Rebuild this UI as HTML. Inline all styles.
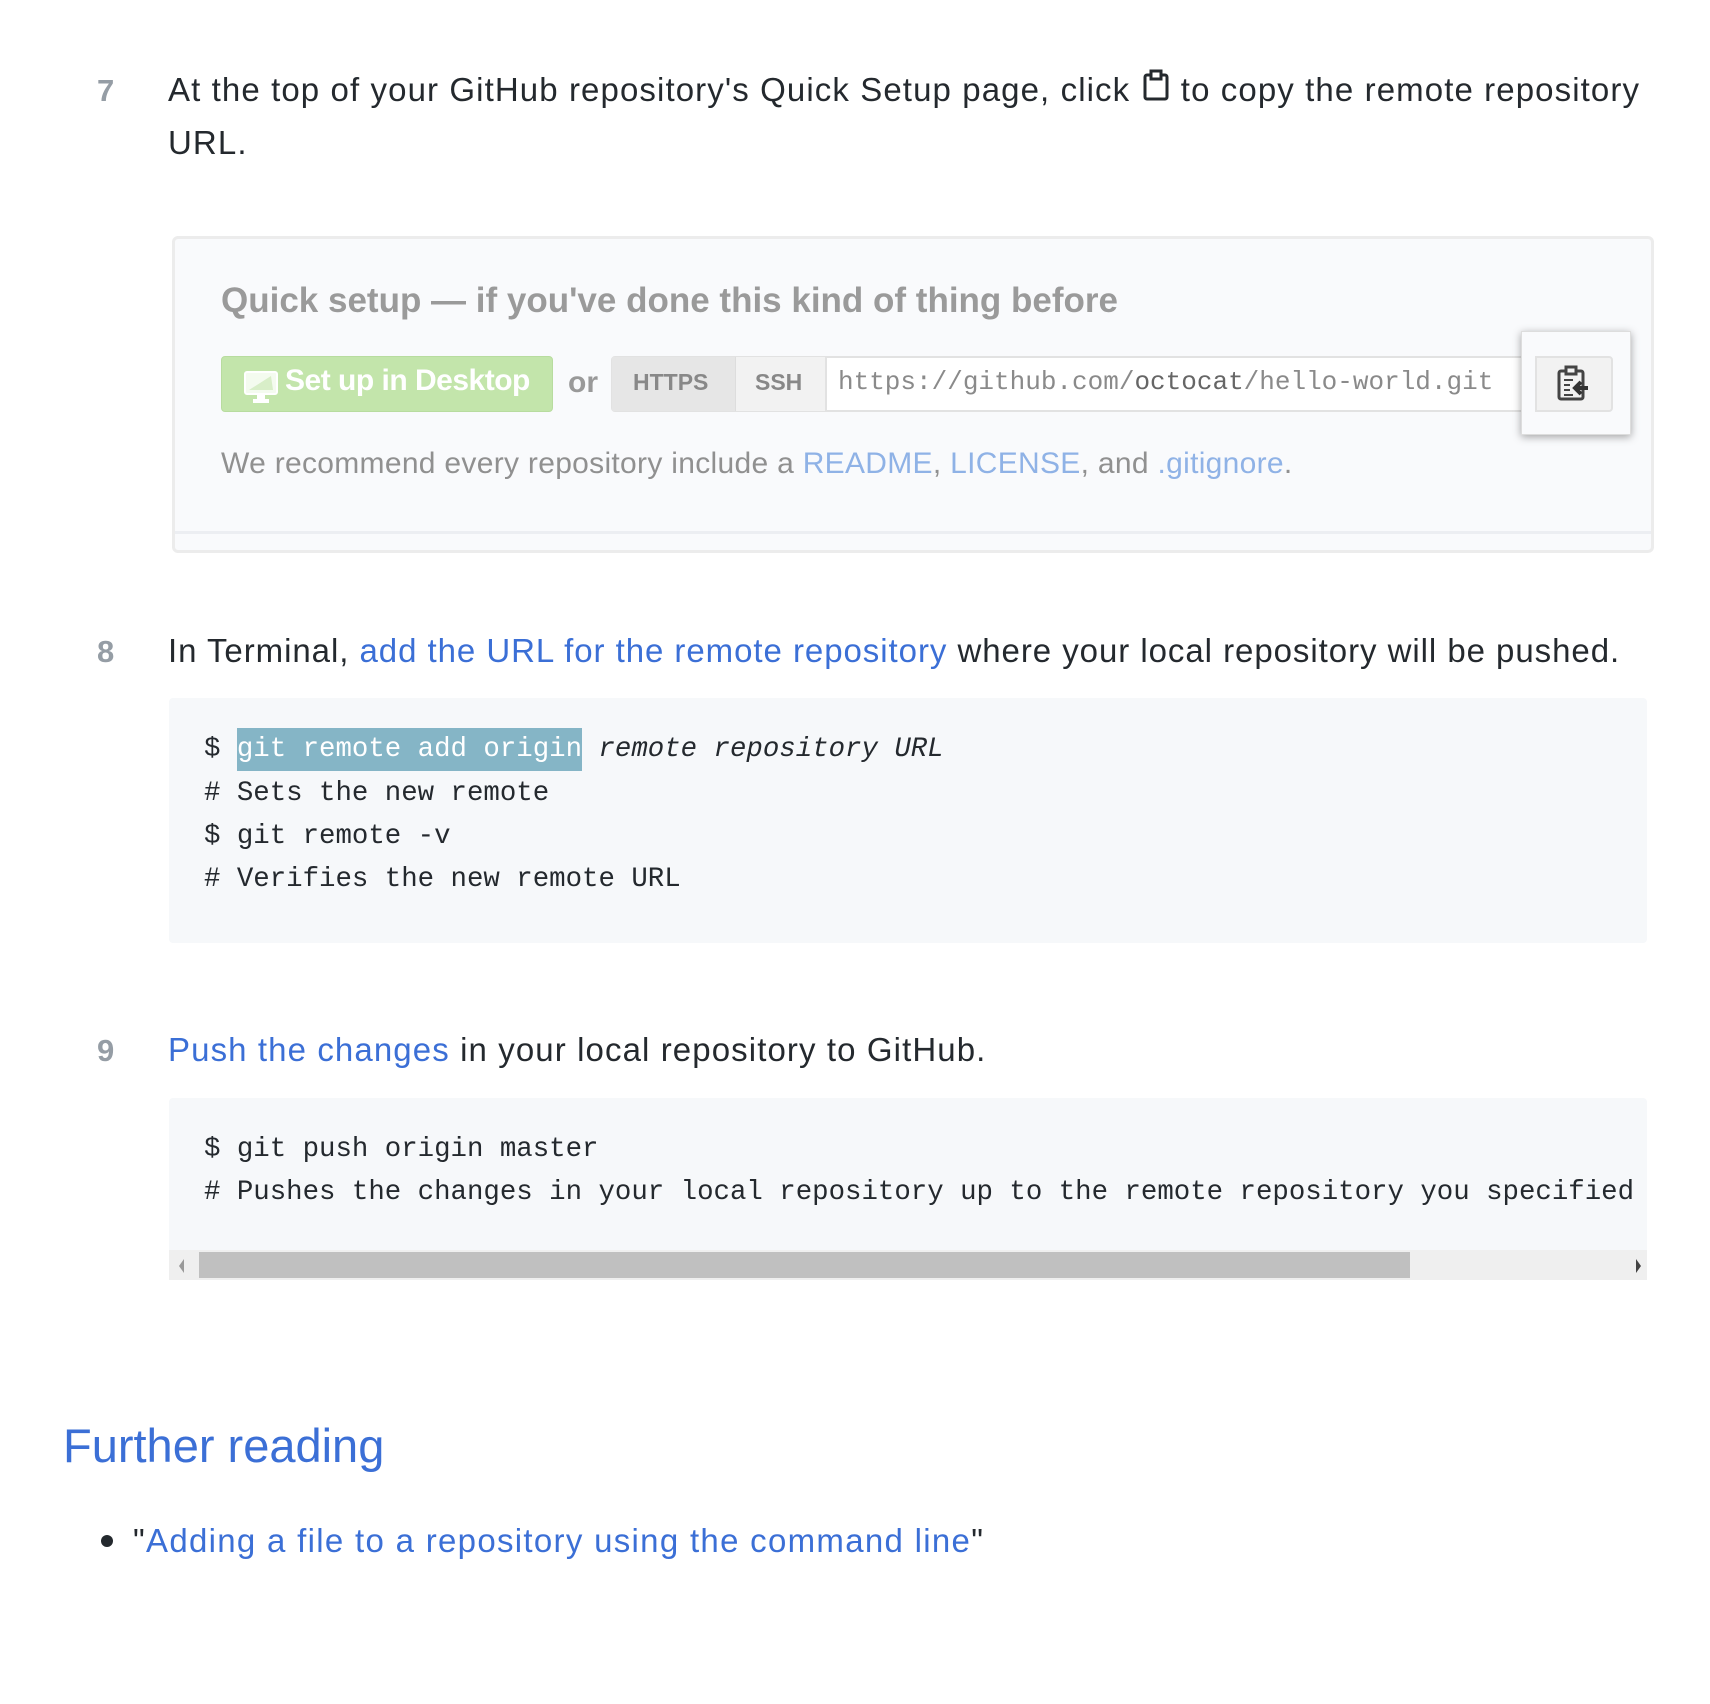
<!DOCTYPE html>
<html><head><meta charset="utf-8"><style>
*{margin:0;padding:0;box-sizing:border-box}
body{width:1710px;height:1704px;background:#fff;position:relative;font-family:"Liberation Sans",sans-serif;color:#24292e;overflow:hidden}
.abs{position:absolute;white-space:nowrap}
.num{font-weight:bold;color:#959da5;font-size:31px}
.p{font-size:33px;line-height:53px;letter-spacing:1.1px}
a{color:#3b6fd6;text-decoration:none}
.code{position:absolute;background:#f6f8fa;left:169px;width:1478px;border-radius:4px}
.mono{font-family:"Liberation Mono",monospace;font-size:27.4px;color:#24292e}
.shot{position:absolute;left:172px;top:236px;width:1482px;height:317px;border:3px solid #ececec;border-radius:6px;background:#f9fafc}
.hv{font-family:"Liberation Sans",sans-serif;color:#9a9a9a}
</style></head><body>

<div class="abs num" style="left:97px;top:73px">7</div>
<div class="abs p" style="left:168px;top:63px">At the top of your GitHub repository's Quick Setup page, click <svg width="30" height="34" viewBox="0 0 30 34" style="vertical-align:-2px"><rect x="4" y="6" width="22" height="24" rx="2" fill="none" stroke="#24292e" stroke-width="3"/><rect x="10" y="2" width="10" height="8" fill="#fff" stroke="#24292e" stroke-width="3"/></svg> to copy the remote repository</div>
<div class="abs p" style="left:168px;top:116px">URL.</div>

<div class="shot">
  <div class="abs hv" style="left:46px;top:42px;font-size:35px;font-weight:bold">Quick setup — if you've done this kind of thing before</div>
  <div class="abs" style="left:46px;top:117px;width:332px;height:56px;background:#c3e5ab;border-radius:4px;border:1px solid #b8dc9f"></div>
  <svg class="abs" style="left:68px;top:131px" width="36" height="34" viewBox="0 0 36 34"><rect x="2" y="2" width="32" height="22" rx="2" fill="#f4fbef" stroke="#fff" stroke-width="2"/><path d="M6 20 L28 6 L30 20Z" fill="#d8eec8"/><rect x="14" y="25" width="8" height="4" fill="#fff"/><rect x="10" y="29" width="16" height="4" fill="#fff"/></svg>
  <div class="abs" style="left:110px;top:125px;font-size:30px;font-weight:bold;color:#fff;letter-spacing:-0.5px">Set up in Desktop</div>
  <div class="abs hv" style="left:393px;top:127px;font-size:30px;font-weight:bold;color:#999">or</div>
  <div class="abs" style="left:436px;top:117px;width:990px;height:56px;border:2px solid #e2e2e2;border-radius:4px;background:#fff"></div>
  <div class="abs" style="left:437px;top:118px;width:123px;height:54px;background:#e6e6e6"></div>
  <div class="abs" style="left:560px;top:118px;width:92px;height:54px;background:#f2f2f2;border-left:1px solid #ddd;border-right:2px solid #e2e2e2"></div>
  <div class="abs" style="left:458px;top:130px;font-size:23px;font-weight:bold;color:#888">HTTPS</div>
  <div class="abs" style="left:580px;top:130px;font-size:23px;font-weight:bold;color:#888">SSH</div>
  <div class="abs" style="left:663px;top:128px;font-family:'Liberation Mono',monospace;font-size:26px;color:#8a8a8a">https://github.com/<span style="color:#666">octocat</span>/hello-world.git</div>
  <div class="abs" style="left:1346px;top:92px;width:110px;height:104px;background:#f9fafc;box-shadow:0 2px 8px rgba(0,0,0,.35);border:1px solid #ddd"></div>
  <div class="abs" style="left:1360px;top:117px;width:78px;height:56px;background:#f2f2f2;border:2px solid #e2e2e2;border-radius:0 4px 4px 0"></div>
  <svg class="abs" style="left:1381px;top:126px" width="34" height="38" viewBox="0 0 34 38"><rect x="3" y="6" width="24" height="28" rx="2" fill="none" stroke="#444" stroke-width="3"/><rect x="10" y="2" width="10" height="7" fill="#f2f2f2" stroke="#444" stroke-width="3"/><path d="M8 15h9M8 20h6M8 25h6M8 30h9" stroke="#444" stroke-width="2"/><path d="M32 23H20M25 17l-6 6 6 6" fill="none" stroke="#333" stroke-width="4"/></svg>
  <div class="abs hv" style="left:46px;top:208px;font-size:30px;letter-spacing:0.3px;color:#909090">We recommend every repository include a <span style="color:#8fb2e6">README</span>, <span style="color:#8fb2e6">LICENSE</span>, and <span style="color:#8fb2e6">.gitignore</span>.</div>
  <div class="abs" style="left:0;top:292px;width:1476px;height:3px;background:#eceef2"></div>
</div>

<div class="abs num" style="left:97px;top:634px">8</div>
<div class="abs p" style="left:168px;top:624px;letter-spacing:0.95px">In Terminal, <a>add the URL for the remote repository</a> where your local repository will be pushed.</div>

<div class="code" style="top:698px;height:245px">
  <div class="abs mono" style="left:35px;top:36px">$ <span style="background:#85b5c6;color:#fff;padding:6px 0">git remote add origin</span> <i>remote repository URL</i></div>
  <div class="abs mono" style="left:35px;top:80px"># Sets the new remote</div>
  <div class="abs mono" style="left:35px;top:123px">$ git remote -v</div>
  <div class="abs mono" style="left:35px;top:166px"># Verifies the new remote URL</div>
</div>

<div class="abs num" style="left:97px;top:1033px">9</div>
<div class="abs p" style="left:168px;top:1023px"><a>Push the changes</a> in your local repository to GitHub.</div>

<div class="code" style="top:1098px;height:182px;border-radius:4px 4px 0 0">
  <div class="abs mono" style="left:35px;top:36px">$ git push origin master</div>
  <div class="abs mono" style="left:35px;top:79px"># Pushes the changes in your local repository up to the remote repository you specified</div>
  <div class="abs" style="left:0;top:152px;width:1478px;height:30px;background:#efefef"></div>
  <div class="abs" style="left:30px;top:154px;width:1211px;height:26px;background:#c0c0c0"></div>
  <div class="abs" style="left:10px;top:161px;width:0;height:0;border-top:7px solid transparent;border-bottom:7px solid transparent;border-right:5px solid #999"></div>
  <div class="abs" style="left:1467px;top:161px;width:0;height:0;border-top:7px solid transparent;border-bottom:7px solid transparent;border-left:5px solid #444"></div>
</div>

<div class="abs" style="left:63px;top:1418px;font-size:47px;color:#3b6fd6">Further reading</div>
<div class="abs" style="left:101px;top:1535px;width:12px;height:12px;border-radius:50%;background:#24292e"></div>
<div class="abs p" style="left:133px;top:1514px;letter-spacing:1.3px">"<a>Adding a file to a repository using the command line</a>"</div>
</body></html>
